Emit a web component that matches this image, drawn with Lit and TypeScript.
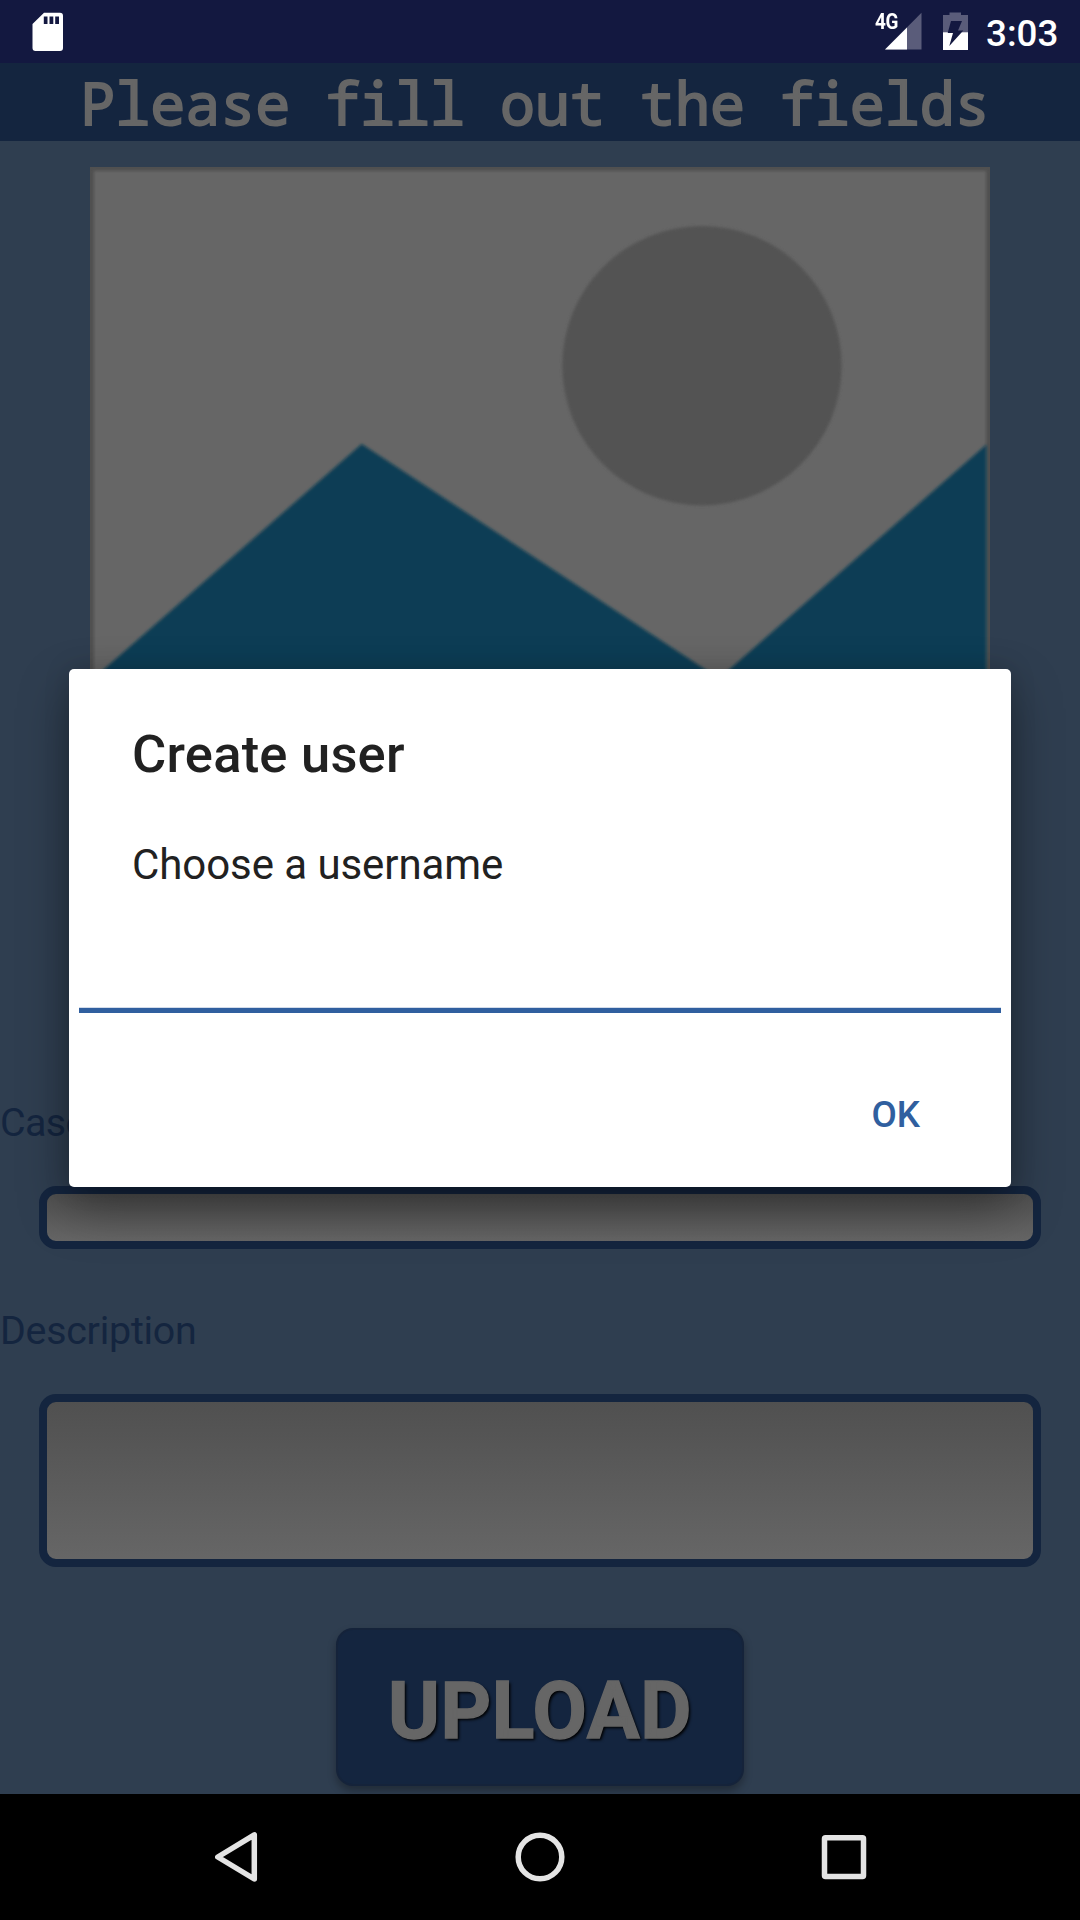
import { LitElement, html, css } from "lit";
import { customElement } from "lit/decorators.js";

@customElement("status-bar")
class StatusBar extends LitElement {
  static styles = css`
    :host { display: flex; align-items: center; height: 63px; background: #131840; box-sizing: border-box; padding: 0 21px 0 30px; color: #fff; }
    .spacer { flex: 1; }
    .icon { display: block; flex: none; }
    .net { font: 700 22px/20px Roboto, sans-serif; align-self: flex-start; margin-top: 12px; width: 10px; white-space: nowrap; letter-spacing: -0.5px; transform: scaleX(0.86); transform-origin: left; }
    .signal { margin-right: 21px; }
    .battery { margin-right: 17px; }
    .time { font: 500 36.75px/43px Roboto, sans-serif; padding-top: 3px; width: 73px; white-space: nowrap; }
  `;
  render() {
    return html`
      <svg class="icon" width="36" height="63" viewBox="30 0 36 63">
        <path fill="#fff" fill-rule="evenodd" d="M44 12.700H60a3 3 0 0 1 3 3V48a3 3 0 0 1-3 3H35.500a3 3 0 0 1-3-3V24ZM43.800 16.500V24H47.500V16.500ZM49.500 16.500V24H53.300V16.500ZM55.200 16.500V24H59V16.500Z"/>
      </svg>
      <span class="spacer"></span>
      <span class="net">4G</span>
      <svg class="icon signal" width="37" height="63" viewBox="885 0 37 63">
        <path fill="#5a5c7a" d="M921.500 12.700V49.500H885Z"/>
        <path fill="#fff" d="M907 27.500V49.500H885Z"/>
      </svg>
      <svg class="icon battery" width="26" height="63" viewBox="943 0 26 63">
        <path fill="#5a5c7a" d="M949.500 12.500H961V15H968V33H943V15H949.500Z"/>
        <path fill="#fff" d="M943 32.300H968V50H943Z"/>
        <path fill="#131840" d="M951 21H962L958 30.500H963.300L949.300 46L953 33H947.700Z"/>
      </svg>
      <span class="time">3:03</span>
    `;
  }
}

@customElement("nav-bar")
class NavBar extends LitElement {
  static styles = css`
    :host { display: flex; height: 126px; background: #000; }
    .icon { display: block; }
  `;
  render() {
    return html`
      <svg class="icon" width="1080" height="126" viewBox="0 1794 1080 126" fill="none" stroke="#e4e4e4" stroke-width="5.500" stroke-linejoin="round">
        <path d="M254.300 1834.800V1879L217.800 1857Z"/>
        <circle cx="540" cy="1857" r="21.800"/>
        <rect x="824.500" y="1837.800" width="39" height="38.800" rx="1"/>
      </svg>
    `;
  }
}

@customElement("user-dialog")
class UserDialog extends LitElement {
  static styles = css`
    :host { display: flex; flex-direction: column; box-sizing: border-box; height: 518px; background: #fff; border-radius: 5px; color: #212121; font-family: Roboto, sans-serif; box-shadow: 0 22px 50px rgba(0, 0, 0, 0.35), 0 0 26px rgba(0, 0, 0, 0.15); }
    .title { font: 500 52.5px/62px Roboto, sans-serif; letter-spacing: 0.22px; margin: 54px 0 0 63px; }
    .label { font: 400 42px/50px Roboto, sans-serif; letter-spacing: -0.07px; margin: 55px 0 0 63px; }
    .field { box-sizing: border-box; margin: 0 10px; border-bottom: 5px solid #305f9f; box-shadow: inset 0 -1px #d3dcea; flex: 0 0 123px; }
    .actions { display: flex; justify-content: flex-end; margin: 80px 91px 0 0; }
    .ok { font: 500 36.75px/44px Roboto, sans-serif; color: #305f9f; }
  `;
  render() {
    return html`
      <div class="title">Create user</div>
      <div class="label">Choose a username</div>
      <div class="field"></div>
      <div class="actions"><span class="ok">OK</span></div>
    `;
  }
}

@customElement("app-root")
class AppRoot extends LitElement {
  static styles = css`
    :host { display: block; width: 1080px; height: 1920px; position: relative; overflow: hidden; font-family: Roboto, sans-serif; }
    .page { display: flex; flex-direction: column; height: 1920px; }
    .content { flex: 1; display: flex; flex-direction: column; background: #2f3e50; min-height: 0; overflow: hidden; }
    .header { height: 78px; box-sizing: border-box; flex: none; padding-right: 10px; background: #14253f; color: #666; text-align: center; white-space: pre; font: 400 58.300px/79px "Droid Sans Mono", "Noto Sans Mono", "Liberation Mono", monospace; -webkit-text-stroke: 1.900px #666; }
    .picture { display: block; flex: none; margin: 26px 90px 0; width: 900px; height: 900px; }
    .label { flex: none; font: 400 39.375px/46px Roboto, sans-serif; letter-spacing: -0.25px; color: #14253f; }
    .case { margin-top: 33px; letter-spacing: -0.6px; }
    .desc { margin-top: 59px; }
    .input { flex: none; box-sizing: border-box; margin: 0 39px; border: 8px solid #14253f; border-radius: 17px; background: linear-gradient(#505050, #666); }
    .short { height: 63px; margin-top: 40px; }
    .tall { height: 173px; margin-top: 40px; }
    .upload { flex: none; width: 408px; height: 158px; box-sizing: border-box; margin: 61px auto 0; border: 2px solid #15233a; border-radius: 17px; background: #14253f; color: #666; text-align: center; font: 700 78.750px/162px Roboto, sans-serif; letter-spacing: 0.6px; -webkit-text-stroke: 1.400px #666; text-shadow: 2px 2px 3px #000; box-shadow: 0 5px 9px rgba(0, 0, 0, 0.3); }
    .dialog { position: absolute; left: 69px; top: 669px; width: 942px; }
  `;
  render() {
    return html`
      <div class="page">
        <status-bar></status-bar>
        <div class="content">
          <div class="header">Please fill out the fields</div>
          <svg class="picture" viewBox="0 0 900 900">
            <defs>
              <filter id="edge" x="-5%" y="-5%" width="110%" height="110%"><feGaussianBlur stdDeviation="1.500"/></filter>
              <clipPath id="frame"><rect width="900" height="900"/></clipPath>
            </defs>
            <g clip-path="url(#frame)">
              <rect width="900" height="900" fill="#505050"/>
              <rect x="4" y="4" width="892" height="892" fill="#666" filter="url(#edge)"/>
              <g filter="url(#edge)">
                <circle cx="612" cy="198.700" r="139.700" fill="#525252"/>
                <path fill="#0d3e54" d="M4 511L271.700 277L629 511.500L896.500 277.500V896H4Z"/>
              </g>
            </g>
          </svg>
          <div class="label case">Case</div>
          <div class="input short"></div>
          <div class="label desc">Description</div>
          <div class="input tall"></div>
          <div class="upload">UPLOAD</div>
        </div>
        <nav-bar></nav-bar>
      </div>
      <user-dialog class="dialog"></user-dialog>
    `;
  }
}
